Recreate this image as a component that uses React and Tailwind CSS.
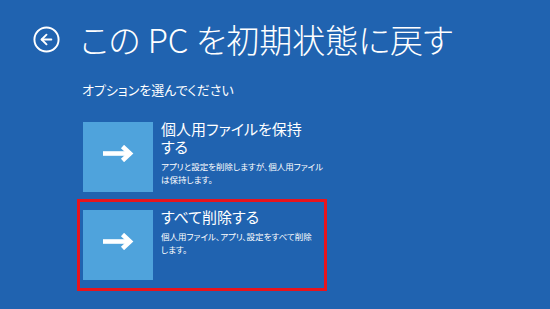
import React from 'react';
import { CircleArrowLeft } from 'lucide-react';

const TileArrow = () => (
  <svg width="32" height="17" viewBox="0 0 32 17" fill="none">
    <path d="M1 8.5H29" stroke="white" strokeWidth="4.6" />
    <path d="M20.5 1.5L28 8.5L20.5 15.5" stroke="white" strokeWidth="4.6" strokeLinejoin="miter" />
  </svg>
);

const Tile = () => (
  <div className="w-[70px] h-[70px] shrink-0 bg-[#4fa3dc] flex items-center justify-center pb-[8px]">
    <TileArrow />
  </div>
);

const Option = ({ title, desc, boxed }) => (
  <div
    className={
      boxed
        ? 'flex w-[250px] border-[3px] border-[#e8141c] px-[3px] py-[8px]'
        : 'flex pl-[6px]'
    }
  >
    <Tile />
    <div className="ml-[8px] -mt-[2px]">
      <div className="text-[15px] leading-[18px]">{title}</div>
      <div className="mt-[4px] text-[8.5px] leading-[12.5px]">{desc}</div>
    </div>
  </div>
);

export default function App() {
  return (
    <div
      className="w-[550px] h-[309px] bg-[#2063b0] overflow-hidden text-white [font-feature-settings:'palt']"
      style={{ fontFamily: '"Noto Sans CJK JP", "Noto Sans", sans-serif' }}
    >
      {/* ヘッダー */}
      <div className="flex items-center h-[40px] mt-[19px] pl-[32px]">
        <CircleArrowLeft size={29} strokeWidth={1.6} />
        <h1 className="ml-[19px] text-[33px] leading-[40px] font-light">この PC を初期状態に戻す</h1>
      </div>

      <p className="ml-[82px] mt-[23px] text-[13px] leading-[16px]">オプションを選んでください</p>

      {/* オプション */}
      <div className="ml-[77px] mt-[24px] flex flex-col gap-[7px]">
        <Option
          title={<>個人用ファイルを保持<br />する</>}
          desc={<>アプリと設定を削除しますが、個人用ファイル<br />は保持します。</>}
        />
        <Option
          boxed
          title="すべて削除する"
          desc={<>個人用ファイル、アプリ、設定をすべて削除<br />します。</>}
        />
      </div>
    </div>
  );
}
